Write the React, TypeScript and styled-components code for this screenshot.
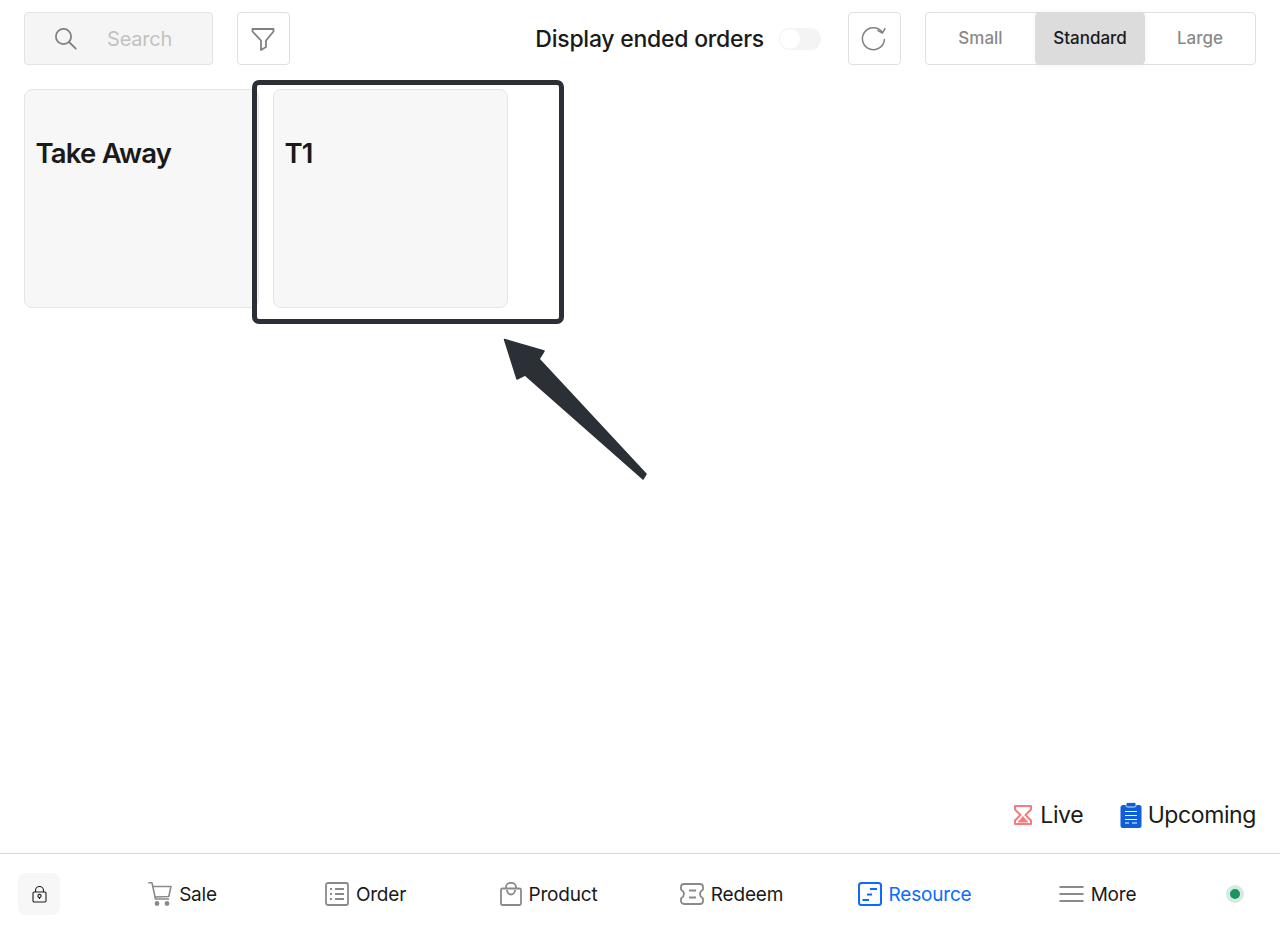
import styled, {createGlobalStyle} from "styled-components";

const GlobalStyle = createGlobalStyle`
    html, body {
        margin: 0;
        padding: 0;
        background: #fff;
    }
    * {
        box-sizing: border-box;
    }
`

const sizes = ["Small", "Standard", "Large"];

function SearchIcon() {
    return (
        <svg width="24" height="24" viewBox="0 0 24 24" fill="none" stroke="#808080" strokeWidth="1.8" strokeLinecap="round">
            <circle cx="9.5" cy="9.5" r="7.6"/>
            <path d="M15 15 L21.8 21.6"/>
        </svg>
    )
}

function FunnelIcon() {
    return (
        <svg width="24" height="24" viewBox="0 0 24 24" fill="none" stroke="#808080" strokeWidth="1.8" strokeLinejoin="round">
            <path d="M1.5 2 H22.5 V4.5 L15 13.5 V20 L10 23 V13.5 L1.5 4.5 Z"/>
        </svg>
    )
}

function RefreshIcon() {
    return (
        <svg width="26" height="26" viewBox="0 0 26 26" fill="none" stroke="#808080" strokeWidth="1.5" strokeLinecap="round" strokeLinejoin="round">
            <path d="M23.4 13.6 A11 11 0 1 1 21 5.8"/>
            <path d="M17 4.6 L21.4 7 L24 2.6"/>
        </svg>
    )
}

function HourglassIcon() {
    return (
        <svg width="18" height="20" viewBox="0 0 18 20" fill="none" stroke="#f47c7c" strokeWidth="2" strokeLinejoin="round">
            <path d="M1 1 H17 V4.5 L11.5 10 L17 15.5 V19 H1 V15.5 L6.5 10 L1 4.5 Z"/>
            <path d="M9 11 L14.5 17.5 H3.5 Z" fill="#f47c7c" stroke="none"/>
        </svg>
    )
}

function ClipboardIcon() {
    return (
        <svg width="22" height="26" viewBox="0 0 22 26">
            <rect x="0.5" y="3" width="21" height="23" rx="2.5" fill="#0f5fdc"/>
            <rect x="6" y="0.5" width="10" height="4.5" rx="1.5" fill="#0f5fdc" stroke="#fff" strokeWidth="0.8"/>
            <path d="M5 9.5 H17 M5 13.5 H17 M5 17.5 H17 M5 21 H9 M12 21 H17" stroke="#fff" strokeWidth="1.2" fill="none"/>
        </svg>
    )
}

function LockIcon() {
    return (
        <svg width="15" height="17" viewBox="0 0 15 17" fill="none" stroke="#1d1d1f" strokeWidth="1.1" strokeLinejoin="round">
            <rect x="1" y="6" width="13" height="10" rx="1.2"/>
            <path d="M3.5 6 V4.5 A4 4 0 0 1 11.5 4.5 V6"/>
            <circle cx="7.5" cy="10" r="1.6"/>
            <path d="M7.5 11.6 V13"/>
        </svg>
    )
}

function CartIcon() {
    return (
        <svg width="24" height="24" viewBox="0 0 24 24" fill="none" stroke="#8a8a8a" strokeWidth="1.6" strokeLinecap="round" strokeLinejoin="round">
            <path d="M0.8 0.8 H4 L7.5 17 H20.5"/>
            <path d="M5 4.5 H23 L20.8 14.5 L7 15"/>
            <circle cx="9" cy="21.5" r="1.6" fill="#8a8a8a"/>
            <circle cx="19" cy="21.5" r="1.6" fill="#8a8a8a"/>
        </svg>
    )
}

function OrderIcon() {
    return (
        <svg width="24" height="24" viewBox="0 0 24 24" fill="none" stroke="#8a8a8a" strokeWidth="1.8">
            <rect x="1" y="1" width="22" height="22" rx="2"/>
            <path d="M10 7 H19 M10 12 H19 M10 17 H19"/>
            <path d="M5 7 H7 M5 12 H7 M5 17 H7" strokeWidth="2"/>
        </svg>
    )
}

function BagIcon() {
    return (
        <svg width="22" height="24" viewBox="0 0 22 24" fill="none" stroke="#8a8a8a" strokeWidth="1.8" strokeLinejoin="round">
            <rect x="1" y="6.5" width="20" height="16.5" rx="1.5"/>
            <path d="M6 6.5 V5 A5 4.2 0 0 1 16 5 V6.5"/>
            <path d="M7 8 A4 4.5 0 0 0 15 8"/>
        </svg>
    )
}

function TicketIcon() {
    return (
        <svg width="24" height="22" viewBox="0 0 24 22" fill="none" stroke="#8a8a8a" strokeWidth="1.8" strokeLinejoin="round">
            <path d="M4 1 H20 A3 3 0 0 1 23 4 V6.5 Q20 8.5 20 11 Q20 13.5 23 15.5 V18 A3 3 0 0 1 20 21 H4 A3 3 0 0 1 1 18 V15.5 Q4 13.5 4 11 Q4 8.5 1 6.5 V4 A3 3 0 0 1 4 1 Z"/>
            <path d="M9 7.5 H16 M9 14.5 H16"/>
        </svg>
    )
}

function ResourceIcon() {
    return (
        <svg width="24" height="24" viewBox="0 0 24 24" fill="none" stroke="#0b6bff" strokeWidth="2">
            <rect x="1" y="1" width="22" height="22" rx="2.5"/>
            <path d="M12 7 H19 M9 12.5 H14 M4.5 18 H11" strokeWidth="1.8"/>
        </svg>
    )
}

function MoreIcon() {
    return (
        <svg width="25" height="18" viewBox="0 0 25 18" fill="none" stroke="#8a8a8a" strokeWidth="2">
            <path d="M0.5 2 H24.5 M0.5 9 H24.5 M0.5 16 H24.5"/>
        </svg>
    )
}

const navItems = [
    {label: "Sale", icon: <CartIcon/>},
    {label: "Order", icon: <OrderIcon/>},
    {label: "Product", icon: <BagIcon/>},
    {label: "Redeem", icon: <TicketIcon/>},
    {label: "Resource", icon: <ResourceIcon/>, active: true},
    {label: "More", icon: <MoreIcon/>},
];

function App() {
    return (
        <Page>
            <GlobalStyle/>
            <Toolbar>
                <SearchBox>
                    <SearchIcon/>
                    <SearchText>Search</SearchText>
                </SearchBox>
                <IconButton><FunnelIcon/></IconButton>
                <Spacer/>
                <ToggleLabel>Display ended orders</ToggleLabel>
                <Toggle><ToggleKnob/></Toggle>
                <IconButton><RefreshIcon/></IconButton>
                <SizeSwitch>
                    {sizes.map((size) => (
                        <SizeOption key={size} $active={size === "Standard"}>{size}</SizeOption>
                    ))}
                </SizeSwitch>
            </Toolbar>

            <Main>
                <TableGrid>
                    <TableCard><TableName>Take Away</TableName></TableCard>
                    <TableCard><TableName>T1</TableName></TableCard>
                </TableGrid>
                <Legend>
                    <LegendItem $gap={8}><HourglassIcon/>Live</LegendItem>
                    <LegendItem $gap={6}><ClipboardIcon/>Upcoming</LegendItem>
                </Legend>
            </Main>

            <BottomBar>
                <LockCell>
                    <LockButton><LockIcon/></LockButton>
                </LockCell>
                <Nav>
                    {navItems.map((item) => (
                        <NavItem key={item.label} $active={item.active}>
                            {item.icon}
                            {item.label}
                        </NavItem>
                    ))}
                </Nav>
                <StatusCell>
                    <StatusDot/>
                </StatusCell>
            </BottomBar>

            <HighlightBox/>
            <ArrowOverlay width="160" height="160" viewBox="0 0 160 160">
                <polygon
                    points="4.5,4.5 44,16 39,24 146,139 143,144 25,40 17,44"
                    fill="#2b2f36"
                    stroke="#2b2f36"
                    strokeWidth="1.5"
                    strokeLinejoin="round"
                />
            </ArrowOverlay>
        </Page>
    )
}

const Page = styled.div`
    position: relative;
    display: flex;
    flex-direction: column;
    width: 1280px;
    height: 936px;
    overflow: hidden;
    font-family: Inter, "Liberation Sans", sans-serif;
    color: #1a1a1a;
`

const Toolbar = styled.div`
    display: flex;
    align-items: center;
    height: 53px;
    margin: 12px 24px 0;
`

const SearchBox = styled.div`
    display: flex;
    align-items: center;
    width: 189px;
    height: 53px;
    margin-right: 24px;
    padding-left: 29px;
    background: #f5f5f5;
    border: 1px solid #e3e3e3;
    border-radius: 4px;
`

const SearchText = styled.span`
    margin-left: 29px;
    font-size: 20px;
    letter-spacing: -0.2px;
    color: #c2c2c2;
`

const IconButton = styled.div`
    display: flex;
    align-items: center;
    justify-content: center;
    width: 53px;
    height: 53px;
    padding-right: 2px;
    background: #fff;
    border: 1px solid #e0e0e0;
    border-radius: 4px;
`

const Spacer = styled.div`
    flex: 1;
`

const ToggleLabel = styled.span`
    font-size: 23px;
    font-weight: 500;
    letter-spacing: -0.25px;
    color: #1a1a1a;
`

const Toggle = styled.div`
    display: flex;
    align-items: center;
    width: 42px;
    height: 22px;
    margin: 0 27px 0 15px;
    padding: 1px;
    background: #f4f4f4;
    border-radius: 11px;
`

const ToggleKnob = styled.div`
    width: 20px;
    height: 20px;
    background: #fff;
    border-radius: 50%;
`

const SizeSwitch = styled.div`
    display: grid;
    grid-template-columns: 109px 110px 1fr;
    width: 331px;
    height: 53px;
    margin-left: 24px;
    border: 1px solid #e0e0e0;
    border-radius: 4px;
`

const SizeOption = styled.div<{$active?: boolean}>`
    display: flex;
    align-items: center;
    justify-content: center;
    margin: -1px 0;
    font-size: 17px;
    font-weight: 500;
    padding-bottom: 2px;
    color: ${({$active}) => ($active ? "#1a1a1a" : "#8a8a8a")};
    background: ${({$active}) => ($active ? "#dcdcdc" : "transparent")};
    box-shadow: ${({$active}) => ($active ? "0 0 5px rgba(0, 0, 0, 0.06)" : "none")};
    border-radius: 5px;
`

const Main = styled.div`
    flex: 1;
    display: flex;
    flex-direction: column;
    justify-content: space-between;
    padding: 24px 24px 23px;
`

const TableGrid = styled.div`
    display: flex;
    gap: 14.5px;
`

const TableCard = styled.div`
    width: 234.5px;
    height: 219px;
    padding: 46px 11px 0 10.5px;
    background: #f7f7f7;
    border: 1px solid #e5e5e5;
    border-radius: 8px;
`

const TableName = styled.div`
    font-size: 27.5px;
    font-weight: 600;
    letter-spacing: -0.8px;
    line-height: 34px;
    color: #1a1a1a;
`

const Legend = styled.div`
    display: flex;
    justify-content: flex-end;
    align-items: center;
    gap: 36.5px;
`

const LegendItem = styled.div<{$gap: number}>`
    display: flex;
    align-items: center;
    gap: ${({$gap}) => $gap}px;
    font-size: 23px;
    letter-spacing: -0.4px;
    line-height: 30px;
    color: #1a1a1a;
`

const BottomBar = styled.div`
    display: grid;
    grid-template-columns: 91px 1fr 91px;
    align-items: center;
    height: 83px;
    padding-bottom: 2px;
    background: #fff;
    border-top: 1px solid #d9d9d9;
`

const LockCell = styled.div`
    padding-left: 18px;
`

const LockButton = styled.div`
    display: flex;
    align-items: center;
    justify-content: center;
    width: 42px;
    height: 42px;
    background: #f7f7f7;
    border-radius: 8px;
`

const Nav = styled.div`
    display: grid;
    grid-template-columns: repeat(6, 1fr);
`

const NavItem = styled.div<{$active?: boolean}>`
    display: flex;
    align-items: center;
    justify-content: center;
    gap: 7px;
    font-size: 19px;
    letter-spacing: -0.2px;
    color: ${({$active}) => ($active ? "#0b6bff" : "#1a1a1a")};
`

const StatusCell = styled.div`
    display: flex;
    justify-content: center;
`

const StatusDot = styled.div`
    width: 18px;
    height: 18px;
    background: #1a9460;
    border: 4px solid #d4ebe0;
    border-radius: 50%;
`

/* annotation drawn over the screen */
const HighlightBox = styled.div`
    position: absolute;
    left: 252px;
    top: 80px;
    width: 312px;
    height: 244px;
    border: 5px solid #2b2f36;
    border-radius: 7px;
    background: transparent;
`

const ArrowOverlay = styled.svg`
    position: absolute;
    left: 500px;
    top: 335px;
`

export default App;
